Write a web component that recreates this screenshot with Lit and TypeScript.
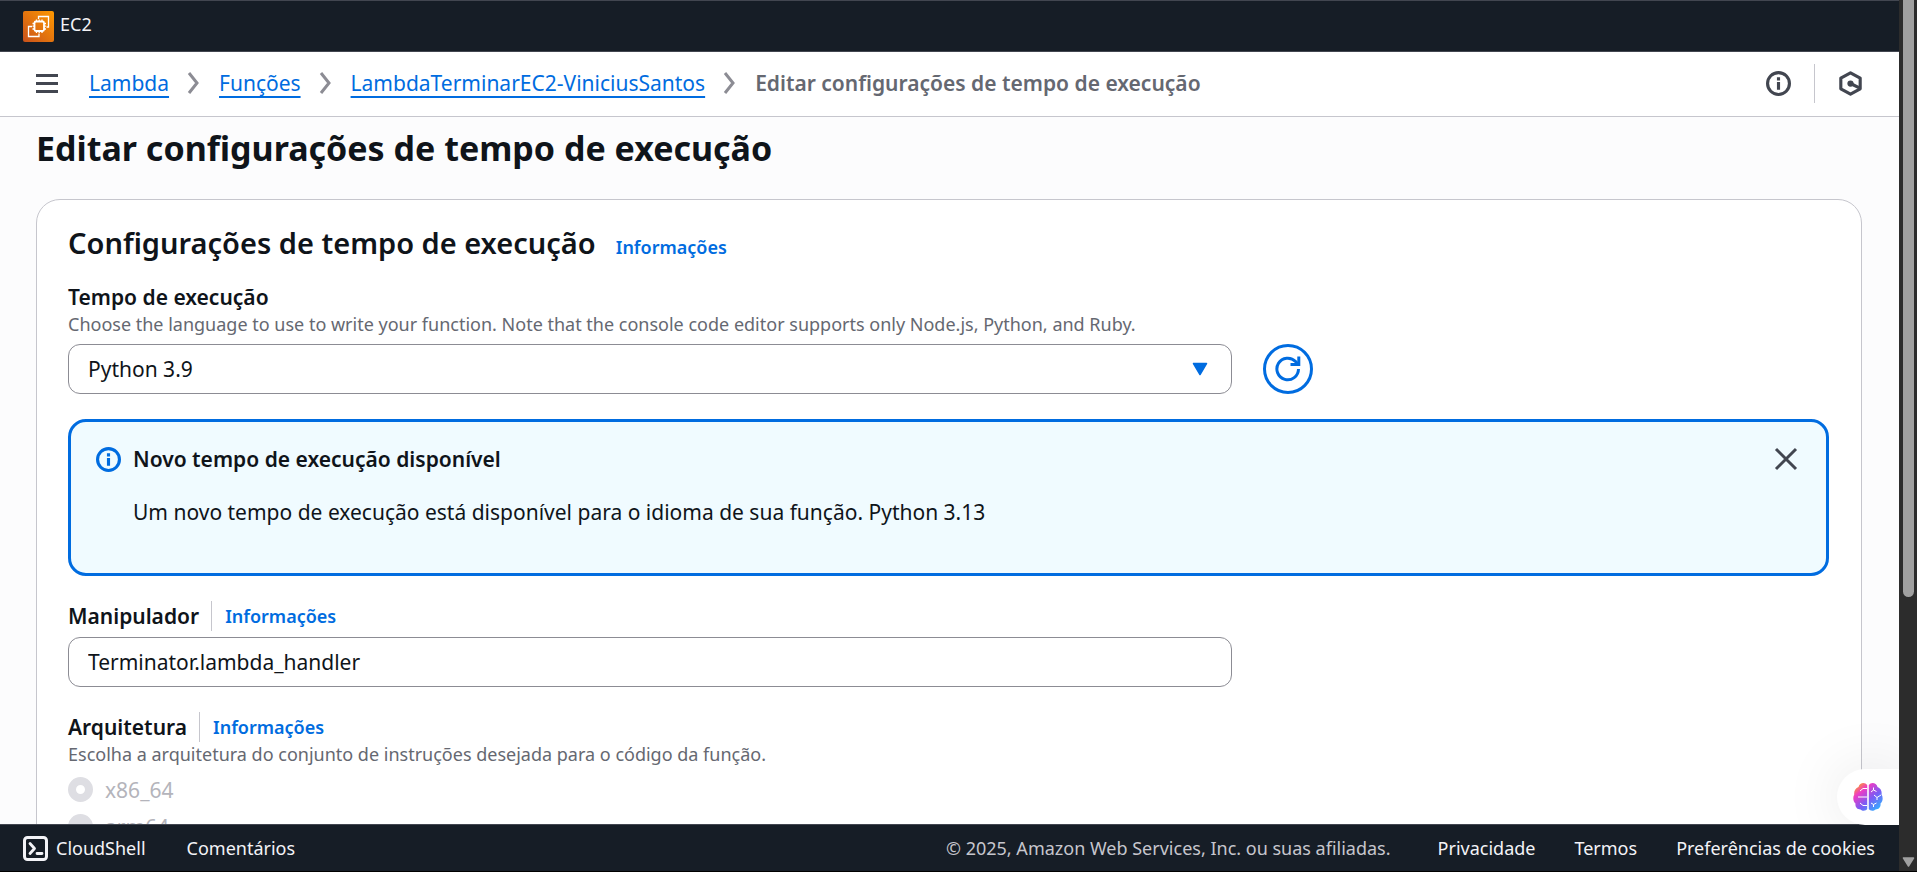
import { LitElement, html, css, svg } from "lit";
import { customElement, state } from "lit/decorators.js";

const chevron = html`<svg class="chevron" viewBox="0 0 16 24" aria-hidden="true">
  <path d="M3 2 L11 12 L3 22" fill="none" stroke="#8c8c94" stroke-width="3" />
</svg>`;

const infoGlyph = svg`
  <circle cx="8" cy="8" r="7" fill="none" stroke="currentColor" stroke-width="2" />
  <path d="M8 12V7M8 6V4" fill="none" stroke="currentColor" stroke-width="2" />`;

@customElement("app-root")
export class AppRoot extends LitElement {
  @state() private alertOpen = true;

  static styles = css`
    :host {
      display: flex;
      height: 100vh;
      box-sizing: border-box;
      border-bottom: 1px solid #000;
      overflow: hidden;
      background: #2c2c2c;
      color: #0f141a;
      font-family: "Noto Sans", "Open Sans", sans-serif;
      font-size: 21px;
      line-height: 30px;
    }
    *, *::before, *::after { box-sizing: border-box; }
    svg { display: block; flex: none; }
    a { color: #006ce0; text-decoration: none; }
    button {
      display: flex; align-items: center; justify-content: center;
      padding: 0; border: 0; background: none; color: inherit; font: inherit; cursor: pointer;
    }
    h1, h2, p, ol, fieldset { margin: 0; padding: 0; border: 0; }
    ol { list-style: none; }

    .page { flex: 1; min-width: 0; display: flex; flex-direction: column; position: relative; }

    .services {
      display: flex; align-items: center; height: 52px; padding: 0 23px; flex: none;
      background: #161d26; border-top: 1px solid #424650; border-bottom: 1px solid #424650;
    }
    .service { display: flex; align-items: flex-start; gap: 6px; color: #f3f3f7; font-size: 18px; line-height: 26px; }
    .service-icon { width: 31px; height: 31px; }

    .crumbs-bar {
      display: flex; align-items: center; height: 65px; flex: none; padding: 0 36px 2px;
      background: #fff; border-bottom: 1px solid #c6c6cd; color: #424650;
    }
    .menu { width: 22px; height: 24px; }
    .crumbs { flex: 1; margin-left: 31px; }
    .crumbs ol, .crumbs li { display: flex; align-items: center; }
    .crumbs a { text-decoration: underline; text-decoration-thickness: 2px; text-underline-offset: 5px; }
    .crumbs .current { color: #656871; font-weight: 600; }
    .chevron { width: 16px; height: 24px; margin: 0 17px; }
    .tools { display: flex; align-items: center; gap: 23px; }
    .tools .rule { width: 1px; height: 39px; background: #c6c6cd; }
    .icon { width: 25px; height: 25px; }

    .main { flex: 1; min-height: 0; overflow: hidden; padding: 9px 37px 0 36px; background: #fcfcfd; }
    h1 { font-size: 34px; line-height: 45px; font-weight: 700; }
    .card {
      margin-top: 28px; padding: 25px 32px 60px 31px;
      background: #fff; border: 1px solid #c6c6cd; border-radius: 24px;
    }
    .card-head { display: flex; align-items: baseline; gap: 20px; }
    h2 { font-size: 29px; line-height: 36px; font-weight: 600; }
    .info { font-size: 18px; line-height: 30px; font-weight: 600; }
    .label { font-weight: 600; }
    .hint { color: #656871; font-size: 18px; line-height: 24px; }
    .field { margin-top: 25px; }
    .card-head + .field { margin-top: 20px; }
    .runtime-row { display: flex; gap: 31px; margin-top: 8px; }
    .select-wrap { position: relative; }
    .control {
      display: block; width: 100%; height: 50px; padding: 0 19px;
      border: 1px solid #8c8c94; border-radius: 12px; background: #fff;
      color: #0f141a; font: inherit; appearance: none; outline: none;
    }
    .narrow { flex: none; width: calc(66% + 2px); }
    .caret { position: absolute; right: 24px; top: 18px; width: 16px; height: 14px; pointer-events: none; }
    .refresh { width: 50px; height: 50px; border: 3px solid #006ce0; border-radius: 50%; color: #006ce0; }

    .alert {
      display: flex; align-items: flex-start; gap: 12px; margin-top: 25px; padding: 22px 28px 37px 25px;
      min-height: 157px; border: 3px solid #006ce0; border-radius: 18px; background: #f0fbff;
    }
    .alert .icon { margin-top: 3px; color: #006ce0; }
    .alert-text { flex: 1; display: flex; flex-direction: column; gap: 23px; }
    .dismiss { width: 24px; height: 30px; color: #424650; }

    .label-row { display: flex; align-items: center; }
    .label-row .info { margin-left: 12px; padding-left: 13px; border-left: 1px solid #c6c6cd; }
    .stack { margin-top: 6px; }
    .radio { display: flex; align-items: center; gap: 12px; height: 37px; color: #b4b4bb; }
    .radio input {
      appearance: none; width: 25px; height: 25px; margin: 0;
      border: 8px solid #dedee3; border-radius: 50%; background: #fff;
    }
    .radio input:not(:checked) { background: #dedee3; }
    .radios { margin-top: 5px; }

    .footer {
      display: flex; align-items: center; height: 47px; flex: none; padding: 0 24px 0 23px;
      background: #161d26; border-top: 1px solid #424650; font-size: 18px;
    }
    .footer a, .footer button { color: #f3f3f7; }
    .footer button { gap: 8px; }
    .feedback { margin-left: 41px; }
    .legal { display: flex; gap: 39px; margin-left: auto; }
    .legal span { color: #c6c6cd; margin-right: 8px; }

    .assistant {
      position: absolute; right: 0; bottom: 46px; width: 62px; height: 56px;
      background: #fff; border-radius: 28px 0 0 28px; box-shadow: 0 0 60px rgba(0, 0, 0, 0.1);
      clip-path: inset(-80px 0 0 -80px);
    }
    .brain { width: 30px; height: 30px; }

    .scrollbar { width: 18px; flex: none; display: flex; flex-direction: column; align-items: center; justify-content: space-between; }
    .thumb { width: 11px; height: 68.5%; background: #a0a0a0; border-radius: 0 0 6px 6px; }
    .down { width: 13px; height: 10px; margin-bottom: 4px; }
  `;

  render() {
    return html`
      <div class="page">
        <header class="services">
          <a class="service" href="#ec2">
            <svg class="service-icon" viewBox="0 0 31 31" aria-hidden="true">
              <defs>
                <linearGradient id="ec2" x1="0" y1="1" x2="1" y2="0">
                  <stop offset="0" stop-color="#c8511b" /><stop offset="1" stop-color="#ff9900" />
                </linearGradient>
              </defs>
              <rect width="31" height="31" rx="2" fill="url(#ec2)" />
              <g fill="none" stroke="#fff" stroke-width="1.3">
                <rect x="11.500" y="10.500" width="9.500" height="9.500" rx="1.500" stroke-width="1.800" />
                <path d="M15.500 8V5.500H25.500V16H23.500M9 15.500H5.500V25.500H16V22.500" />
                <path d="M13.500 8.500v2M16.200 8.500v2M19 8.500v2M13.500 20v2M16.200 20v2M19 20v2M9.500 12.500h2M9.500 15.200h2M9.500 18h2M21 12.500h2M21 15.200h2M21 18h2" />
              </g>
            </svg>
            <span>EC2</span>
          </a>
        </header>

        <div class="crumbs-bar">
          <button class="menu" aria-label="Menu">
            <svg width="22" height="24" viewBox="0 0 22 24">
              <path d="M0 4.500H22M0 12.500H22M0 20.500H22" stroke="currentColor" stroke-width="3" />
            </svg>
          </button>
          <nav class="crumbs">
            <ol>
              <li><a href="#lambda">Lambda</a>${chevron}</li>
              <li><a href="#funcoes">Funções</a>${chevron}</li>
              <li><a href="#funcao">LambdaTerminarEC2-ViniciusSantos</a>${chevron}</li>
              <li class="current">Editar configurações de tempo de execução</li>
            </ol>
          </nav>
          <div class="tools">
            <button aria-label="Informações"><svg class="icon" viewBox="0 0 16 16">${infoGlyph}</svg></button>
            <span class="rule"></span>
            <button aria-label="Tutoriais">
              <svg class="icon" viewBox="0 0 16 16">
                <path d="M8 1.200L14.200 4.600V11.400L8 14.800L1.800 11.400V4.600Z" fill="none" stroke="currentColor" stroke-width="2" stroke-linejoin="round" />
                <circle cx="8" cy="8" r="2" fill="currentColor" />
                <path d="M8 8L14 11" stroke="currentColor" stroke-width="2" />
              </svg>
            </button>
          </div>
        </div>

        <main class="main">
          <h1>Editar configurações de tempo de execução</h1>
          <section class="card">
            <div class="card-head">
              <h2>Configurações de tempo de execução</h2>
              <a class="info" href="#info">Informações</a>
            </div>

            <div class="field">
              <label class="label" for="runtime">Tempo de execução</label>
              <p class="hint">Choose the language to use to write your function. Note that the console code editor supports only Node.js, Python, and Ruby.</p>
              <div class="runtime-row">
                <div class="select-wrap narrow">
                  <select class="control" id="runtime">
                    <option>Python 3.9</option>
                    <option>Python 3.13</option>
                  </select>
                  <svg class="caret" viewBox="0 0 16 14" aria-hidden="true">
                    <path d="M1.500 1.500H14.500L8 12.500Z" fill="#006ce0" stroke="#006ce0" stroke-width="1.500" stroke-linejoin="round" />
                  </svg>
                </div>
                <button class="refresh" aria-label="Atualizar">
                  <svg width="26" height="26" viewBox="0 0 26 26">
                    <path d="M23.500 13A10.800 10.800 0 1 1 20.600 5.600L23 8.500" fill="none" stroke="currentColor" stroke-width="3" />
                    <path d="M23.800 0.500V8.500H15.500" fill="none" stroke="currentColor" stroke-width="3" />
                  </svg>
                </button>
              </div>
            </div>

            ${this.alertOpen
              ? html`<div class="alert" role="status">
                  <svg class="icon" viewBox="0 0 16 16" aria-hidden="true">${infoGlyph}</svg>
                  <div class="alert-text">
                    <p class="label">Novo tempo de execução disponível</p>
                    <p>Um novo tempo de execução está disponível para o idioma de sua função. Python 3.13</p>
                  </div>
                  <button class="dismiss" aria-label="Fechar" @click=${() => (this.alertOpen = false)}>
                    <svg width="24" height="24" viewBox="0 0 24 24">
                      <path d="M2 2L22 22M22 2L2 22" stroke="currentColor" stroke-width="3" />
                    </svg>
                  </button>
                </div>`
              : null}

            <div class="field">
              <div class="label-row">
                <label class="label" for="handler">Manipulador</label>
                <a class="info" href="#info">Informações</a>
              </div>
              <input class="control narrow stack" id="handler" type="text" value="Terminator.lambda_handler" />
            </div>

            <fieldset class="field">
              <div class="label-row">
                <span class="label">Arquitetura</span>
                <a class="info" href="#info">Informações</a>
              </div>
              <p class="hint">Escolha a arquitetura do conjunto de instruções desejada para o código da função.</p>
              <div class="radios">
                <label class="radio"><input type="radio" name="arch" checked disabled />x86_64</label>
                <label class="radio"><input type="radio" name="arch" disabled />arm64</label>
              </div>
            </fieldset>
          </section>
        </main>

        <footer class="footer">
          <button>
            <svg width="25" height="25" viewBox="0 0 25 25" aria-hidden="true">
              <rect x="1.500" y="1.500" width="22" height="22" rx="3" fill="none" stroke="currentColor" stroke-width="3" />
              <path d="M7 7.500L11.500 12.500L7 17.500M14 17.500H19" fill="none" stroke="currentColor" stroke-width="2.800" stroke-linecap="round" stroke-linejoin="round" />
            </svg>
            CloudShell
          </button>
          <a class="feedback" href="#feedback">Comentários</a>
          <div class="legal">
            <span>© 2025, Amazon Web Services, Inc. ou suas afiliadas.</span>
            <a href="#privacy">Privacidade</a>
            <a href="#terms">Termos</a>
            <a href="#cookies">Preferências de cookies</a>
          </div>
        </footer>

        <button class="assistant" aria-label="Assistente">
          <svg class="brain" viewBox="0 0 30 30">
            <defs>
              <linearGradient id="brain" x1="0.100" y1="0.050" x2="0.900" y2="0.950">
                <stop offset="0" stop-color="#ffa51f" /><stop offset="0.250" stop-color="#ee3bc4" />
                <stop offset="0.600" stop-color="#7b5cf5" /><stop offset="1" stop-color="#2fb4ff" />
              </linearGradient>
            </defs>
            <path fill="url(#brain)" d="M14.200 3V27C13 29 9.500 29.400 7.500 27.500C4 27.500 2 25 2.500 21.500C0 19.500 -0.300 15 1.200 12.500C0.800 9 2.500 6 5.500 5C6.500 0.500 12 -0.500 14.200 3ZM15.800 3C18 -0.500 23.500 0.500 24.500 5C27.500 6 29.200 9 28.500 12.500C30.300 15 30 19.500 27.500 21.500C28 25 26 27.500 22.500 27.500C20.500 29.400 17 29 15.800 27Z" />
            <path fill="none" stroke="#fff" stroke-width="1" d="M14 6.500H10L7 9M14 15H5M14 23.500H10L7 21M20.500 5.500V8L18 10M20.500 8L23.500 9.500M21 13L24 15.500L28 13M24 15.500V18M18 21L20.500 22.500L23.500 21M20.500 22.500V25" />
          </svg>
        </button>
      </div>

      <div class="scrollbar" aria-hidden="true">
        <div class="thumb"></div>
        <svg class="down" viewBox="0 0 13 10"><path d="M1.500 1H11.500L6.500 9Z" fill="#a0a0a0" stroke="#a0a0a0" stroke-width="1.500" stroke-linejoin="round" /></svg>
      </div>
    `;
  }
}
